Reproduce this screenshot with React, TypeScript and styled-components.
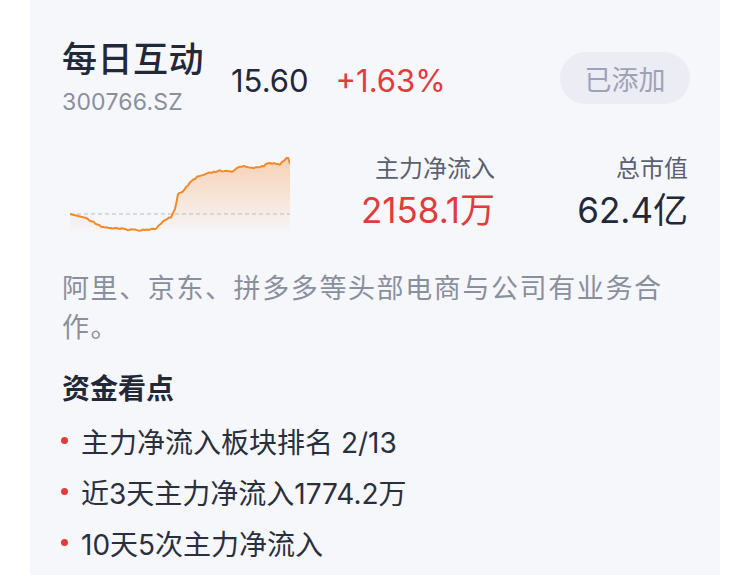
import styled, { createGlobalStyle } from 'styled-components'

const GlobalStyle = createGlobalStyle`
  html, body {
    margin: 0;
    padding: 0;
    background: #ffffff;
  }
  body {
    font-family: "Inter", "Noto Sans CJK SC", sans-serif;
    -webkit-font-smoothing: antialiased;
  }
`

const Page = styled.div`
  width: 750px;
  height: 575px;
  overflow: hidden;
  padding: 0 30px;
  box-sizing: border-box;
`

const Card = styled.div`
  height: 100%;
  background: #f6f7fb;
  padding: 37px 30px 0 32px;
  box-sizing: border-box;
`

const Header = styled.div`
  display: flex;
  align-items: center;
`

const NameBlock = styled.div`
  display: flex;
  flex-direction: column;
`

const Name = styled.div`
  font-size: 35px;
  font-weight: 500;
  line-height: 44px;
  color: #222838;
  letter-spacing: 0.5px;
`

const Code = styled.div`
  margin-top: 4px;
  font-size: 23px;
  line-height: 34px;
  color: #8a8f9e;
  letter-spacing: 0.2px;
`

const Quote = styled.span<{ $up?: boolean }>`
  margin-left: 27px;
  margin-top: 4px;
  font-size: 31px;
  color: ${(p) => (p.$up ? '#e23b3b' : '#222838')};
`

const AddedButton = styled.div`
  margin-left: auto;
  width: 130px;
  height: 52px;
  border-radius: 26px;
  background: #ebecf4;
  color: #9ea2b4;
  font-size: 27px;
  display: flex;
  align-items: center;
  justify-content: center;
`

const StatsRow = styled.div`
  display: flex;
  align-items: center;
  margin-top: 34px;
  padding-left: 8px;
`

const Stat = styled.div<{ $width: number }>`
  width: ${(p) => p.$width}px;
  display: flex;
  flex-direction: column;
  align-items: flex-end;
`

const StatLabel = styled.div`
  font-size: 24px;
  line-height: 32px;
  color: #5b6070;
`

const StatValue = styled.div<{ $up?: boolean }>`
  font-size: 35px;
  line-height: 50px;
  color: ${(p) => (p.$up ? '#e23b3b' : '#222838')};
`

const Desc = styled.p`
  margin: 34px 0 0;
  max-width: 626px;
  font-size: 27px;
  line-height: 39px;
  color: #8a8f9e;
  letter-spacing: 1.6px;
`

const SectionTitle = styled.div`
  margin-top: 22px;
  font-size: 28px;
  font-weight: 700;
  line-height: 40px;
  color: #222838;
`

const List = styled.ul`
  margin: 6px 0 0;
  padding: 0;
  list-style: none;
`

const Item = styled.li`
  display: flex;
  align-items: center;
  height: 51px;
  font-size: 28px;
  color: #2a2f3e;

  &::before {
    content: '';
    width: 7px;
    height: 7px;
    border-radius: 50%;
    background: #e23b3b;
    margin: 0 13px 0 -1px;
    flex-shrink: 0;
  }
`

const keys: [number, number][] = [
  [0, 57], [16, 61], [33, 70], [50, 72], [67, 73], [85, 72], [93, 65],
  [101, 60], [105, 52], [108, 37], [113, 35], [118, 28], [127, 20],
  [140, 16], [150, 14], [162, 15], [170, 9], [188, 11], [200, 6],
  [210, 7], [216, 2], [218, 1], [220, 7],
]

function buildLine() {
  const pts: [number, number][] = []
  let n = 0
  for (let k = 0; k < keys.length - 1; k++) {
    const [x0, y0] = keys[k]
    const [x1, y1] = keys[k + 1]
    const steps = Math.max(1, Math.round((x1 - x0) / 2))
    for (let s = 0; s < steps; s++) {
      const t = s / steps
      const r = Math.sin(n * 12.9898) * 43758.5453
      const j = (r - Math.floor(r) - 0.5) * 1.6
      n++
      pts.push([x0 + (x1 - x0) * t, y0 + (y1 - y0) * t + (k > 0 ? j : 0)])
    }
  }
  pts.push(keys[keys.length - 1])
  return pts
}

function MiniChart() {
  const pts = buildLine()
  const line = pts.map((p, i) => `${i ? 'L' : 'M'}${p[0].toFixed(1)} ${p[1].toFixed(1)}`).join(' ')
  const area = `${line} L220 75 L0 75 Z`
  return (
    <svg width="220" height="75" viewBox="0 0 220 75">
      <defs>
        <linearGradient id="fillGrad" x1="0" y1="0" x2="0" y2="1">
          <stop offset="0%" stopColor="#f7a35c" stopOpacity="0.45" />
          <stop offset="100%" stopColor="#f7a35c" stopOpacity="0.02" />
        </linearGradient>
      </defs>
      <path d={area} fill="url(#fillGrad)" />
      <line x1="0" y1="57" x2="220" y2="57" stroke="#b9bcc6" strokeWidth="1.2" strokeDasharray="4 3" />
      <path d={line} fill="none" stroke="#f28a2a" strokeWidth="2" strokeLinejoin="round" />
    </svg>
  )
}

export default function App() {
  return (
    <>
      <GlobalStyle />
      <Page>
        <Card>
          <Header>
            <NameBlock>
              <Name>每日互动</Name>
              <Code>300766.SZ</Code>
            </NameBlock>
            <Quote>15.60</Quote>
            <Quote $up>+1.63%</Quote>
            <AddedButton>已添加</AddedButton>
          </Header>
          <StatsRow>
            <MiniChart />
            <Stat $width={205}>
              <StatLabel>主力净流入</StatLabel>
              <StatValue $up>2158.1万</StatValue>
            </Stat>
            <Stat $width={193}>
              <StatLabel>总市值</StatLabel>
              <StatValue>62.4亿</StatValue>
            </Stat>
          </StatsRow>
          <Desc>阿里、京东、拼多多等头部电商与公司有业务合作。</Desc>
          <SectionTitle>资金看点</SectionTitle>
          <List>
            <Item>主力净流入板块排名 2/13</Item>
            <Item>近3天主力净流入1774.2万</Item>
            <Item>10天5次主力净流入</Item>
          </List>
        </Card>
      </Page>
    </>
  )
}
